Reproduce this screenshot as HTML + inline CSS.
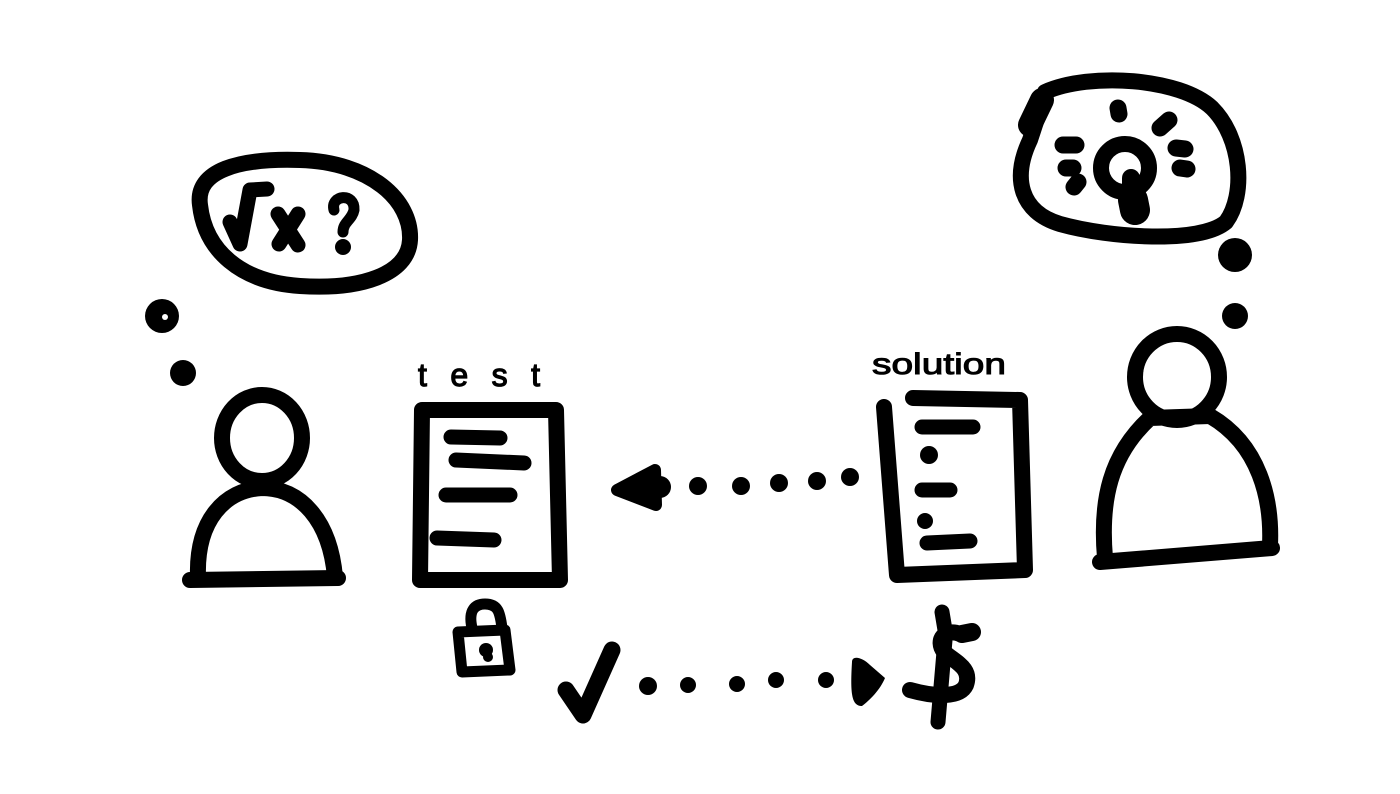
<!DOCTYPE html>
<html><head><meta charset="utf-8"><style>
html,body{margin:0;padding:0;background:#fff;width:1400px;height:794px;overflow:hidden}
svg{display:block}
</style></head><body>
<svg width="1400" height="794" viewBox="0 0 1400 794" xmlns="http://www.w3.org/2000/svg">
<g fill="none" stroke="#000" stroke-linecap="round" stroke-linejoin="round" stroke-width="16">
<path d="M200,205 C195,170 240,158 300,160 C370,162 412,200 410,240 C408,275 360,290 300,286 C240,282 205,250 200,205 Z"/>
<path d="M230,222 L240,244 L250,190 L267,189" stroke-width="15"/>
<path d="M278,214 L298,245 M298,214 L279,244" stroke-width="15"/>
<ellipse cx="262" cy="438" rx="40" ry="43"/>
<path d="M198,577 C196,520 225,490 262,488 C300,488 330,520 335,577"/>
<path d="M190,580 L338,578"/>
<path d="M422,410 L556,410 L560,580 L420,580 Z"/>
<path d="M451,437 L500,438 M456,460 L524,463 M446,495 L510,495 M437,538 L494,540" stroke-width="15"/>
<path d="M617,490 L655,470 L656,505 Z" fill="#000" stroke-width="12"/>
<path d="M660,487 L660,487" stroke-width="22"/>
<path d="M884,407 L897,575 L1025,570 L1020,400 L913,398"/>
<path d="M922,427 L973,427 M922,490 L950,490 M927,543 L970,541" stroke-width="15"/>
<path d="M1045,92 C1090,72 1180,78 1212,108 C1242,138 1246,195 1226,222 C1200,244 1110,238 1060,224 C1020,212 1012,178 1030,140 C1035,125 1040,110 1045,92 Z"/>
<path d="M1030,125 L1042,100" stroke-width="24"/>
<circle cx="1125" cy="168" r="24"/>
<path d="M1131,178 L1131,210" stroke-width="18"/>
<path d="M1133,200 L1135,210" stroke-width="30"/>
<path d="M1118,108 L1119,114 M1160,128 L1169,120 M1063,145 L1076,145 M1066,168 L1073,168 M1074,187 L1078,182 M1176,148 L1185,149 M1180,168 L1187,169" stroke-width="17"/>
<ellipse cx="1177" cy="377" rx="42" ry="43"/>
<path d="M1105,558 C1100,500 1110,455 1150,418 L1210,416 C1260,445 1272,500 1270,545"/>
<path d="M1100,562 L1272,548"/>
<path d="M472,628 C468,610 475,604 485,604 C498,604 500,612 502,628" stroke-width="11"/>
<path d="M458,632 L505,630 L510,670 L462,672 Z" stroke-width="11"/>
<path d="M566,690 L583,715 L612,650" stroke-width="17"/>
<path d="M960,634 C945,628 935,640 944,652 C955,662 972,668 966,685 C960,698 935,697 910,690"/>
<path d="M942,612 L945,630 M945,640 L938,722" stroke-width="15"/>
<path d="M962,634 L972,632" stroke-width="18"/>
</g>
<g fill="#000">
<circle cx="162" cy="316" r="17"/><circle cx="165" cy="317" r="3" fill="#fff"/>
<circle cx="183" cy="373" r="13"/>
<circle cx="343" cy="247" r="8"/>
<circle cx="1235" cy="255" r="17"/>
<circle cx="1235" cy="316" r="13"/>
<circle cx="698" cy="486" r="9"/><circle cx="741" cy="486" r="9"/><circle cx="779" cy="483" r="9"/><circle cx="817" cy="481" r="9"/><circle cx="850" cy="477" r="9"/>
<circle cx="929" cy="455" r="9"/><circle cx="925" cy="521" r="8"/>
<circle cx="648" cy="686" r="9"/><circle cx="688" cy="685" r="8"/><circle cx="737" cy="684" r="8"/><circle cx="776" cy="680" r="8"/><circle cx="826" cy="680" r="8"/>
<path d="M852,662 C852,655 862,657 870,665 L885,678 C880,690 870,700 862,706 C852,706 850,695 852,662 Z"/>
<circle cx="486" cy="650" r="7"/><circle cx="488" cy="657" r="5"/>
</g>
<path d="M334,210 C330,195 355,192 354,210 C352,220 343,222 343,232" fill="none" stroke="#000" stroke-width="11" stroke-linecap="round"/>
<text x="418" y="386" font-family="Liberation Sans, sans-serif" font-size="32" textLength="122" lengthAdjust="spacing" fill="#000" stroke="#000" stroke-width="1.2">test</text>
<text x="872" y="374" font-family="Liberation Sans, sans-serif" font-size="30" textLength="134" lengthAdjust="spacingAndGlyphs" fill="#000" stroke="#000" stroke-width="1">solution</text>
</svg>
</body></html>
